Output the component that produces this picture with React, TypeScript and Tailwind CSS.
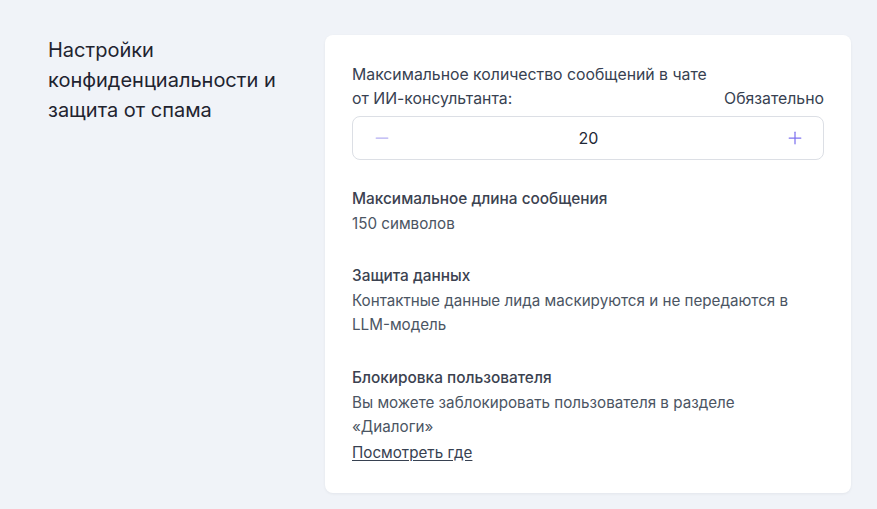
import { Minus, Plus } from 'lucide-react';

type InfoItem = {
  title: string;
  lines: string[];
  link?: string;
};

const items: InfoItem[] = [
  { title: 'Максимальное длина сообщения', lines: ['150 символов'] },
  {
    title: 'Защита данных',
    lines: ['Контактные данные лида маскируются и не передаются в LLM-модель'],
  },
  {
    title: 'Блокировка пользователя',
    lines: ['Вы можете заблокировать пользователя в разделе «Диалоги»'],
    link: 'Посмотреть где',
  },
];

export default function App() {
  return (
    <div
      className="min-h-[509px] w-full bg-[#f0f3f8] pl-12 pr-[26px] pt-[35px] text-[#1f2937]"
      style={{ fontFamily: 'Inter, "Noto Sans", sans-serif' }}
    >
      <div className="flex">
        <div className="w-[277px] shrink-0 pr-6">
          <h2 className="text-[20px] leading-[30px] text-[#1f2430]">
            Настройки конфиденциальности и защита от спама
          </h2>
        </div>

        <div className="flex-1 rounded-lg bg-white px-[27px] pb-[28px] pt-[28px] shadow-[0_1px_3px_rgba(15,23,42,0.06)]">
          {/* Счётчик сообщений */}
          <div className="flex items-end justify-between text-[15.8px] leading-6 text-[#374151]">
            <span className="w-[370px]">Максимальное количество сообщений в чате от ИИ-консультанта:</span>
            <span>Обязательно</span>
          </div>
          <div className="mt-[5px] flex h-[44px] items-center justify-between rounded-lg border border-[#dcdfe5] pl-[19px] pr-[18px]">
            <button type="button" className="text-[#b4aef2]">
              <Minus size={20} strokeWidth={1.5} />
            </button>
            <span className="text-[16px] text-[#1f2937]">20</span>
            <button type="button" className="text-[#7f73ef]">
              <Plus size={20} strokeWidth={1.5} />
            </button>
          </div>

          <div className="mt-[27px] flex flex-col gap-[28px]">
            {items.map((item) => (
              <div key={item.title} className="leading-[24.6px]">
                <p className="text-[15.4px] font-medium text-[#3b4250]">{item.title}</p>
                {item.lines.map((l) => (
                  <p key={l} className="max-w-[450px] text-[15.2px] text-[#4b5563]">
                    {l}
                  </p>
                ))}
                {item.link && (
                  <a href="#" className="text-[15.2px] text-[#374151] underline underline-offset-2">
                    {item.link}
                  </a>
                )}
              </div>
            ))}
          </div>
        </div>
      </div>
    </div>
  );
}
